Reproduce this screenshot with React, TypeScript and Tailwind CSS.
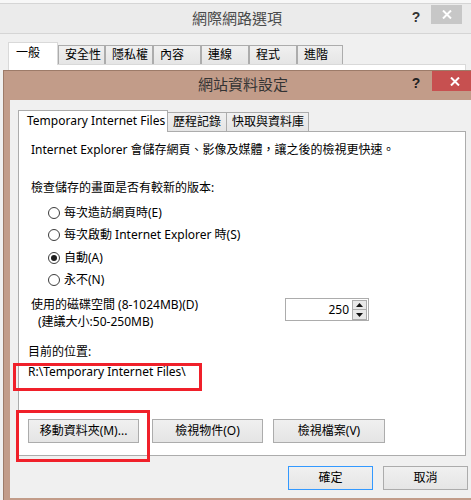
const ui = "font-['Noto_Sans','Noto_Sans_CJK_TC',sans-serif]";

function CloseGlyph() {
  return (
    <svg width="10" height="9" viewBox="0 0 10 9">
      <path d="M1 0.5 L9 8.5 M9 0.5 L1 8.5" stroke="#fff" strokeWidth="2" />
    </svg>
  );
}

function Btn({ label, w, primary }: { label: string; w: string; primary?: boolean }) {
  return (
    <div
      className={`${w} h-[24px] flex items-center justify-center border bg-linear-to-b from-[#f0f0f0] to-[#e5e5e5] leading-[16px] ${
        primary ? 'border-[#3399ff]' : 'border-[#acacac]'
      }`}
    >
      {label}
    </div>
  );
}

function Radio({ label, checked, h }: { label: string; checked?: boolean; h: string }) {
  return (
    <div className={`flex items-center ${h} pl-[29px] leading-[16px]`}>
      <span className="w-[12px] h-[12px] rounded-full border border-[#3c3c3c] bg-white flex items-center justify-center">
        {checked && <span className="w-[6px] h-[6px] rounded-full bg-[#1e1e1e]" />}
      </span>
      <span className="ml-[4px]">{label}</span>
    </div>
  );
}

export default function App() {
  const outerTabs = [
    { label: '安全性', w: 'w-[47px]' },
    { label: '隱私權', w: 'w-[48px]' },
    { label: '內容', w: 'w-[48px]' },
    { label: '連線', w: 'w-[48px]' },
    { label: '程式', w: 'w-[48px]' },
    { label: '進階', w: 'w-[46px]' },
  ];

  return (
    <div className={`relative w-[471px] h-[500px] overflow-hidden bg-[#f0f0f0] text-[12px] text-black ${ui}`}>
      {/* 網際網路選項 (外層視窗) */}
      <div className="h-[3px] bg-[#f7f7f7]" />
      <div className="flex h-[31px] border-t border-b border-[#d5d5d5] bg-[#ebebeb]">
        <div className="flex-1 pl-[66px] text-center text-[15px] leading-[29px] text-[#4a4a4a]">網際網路選項</div>
        <div className="w-[16px] text-center font-['Liberation_Sans',sans-serif] font-bold text-[14px] leading-[26px] text-[#333]">?</div>
        <div className="ml-[7px] mr-[9px] mt-[1px] w-[31px] h-[19px] bg-[#c7c7c7] flex items-center justify-center">
          <CloseGlyph />
        </div>
      </div>
      <div className="mt-[8px] ml-[8px] flex items-end h-[22px]">
        <div className="relative z-10 -mb-px w-[50px] h-[23px] pl-[7px] border border-b-0 border-[#d9d9d9] bg-white leading-[20px]">一般</div>
        {outerTabs.map((t) => (
          <div
            key={t.label}
            className={`${t.w} h-[19px] pl-[6px] border border-b-0 border-[#acacac] bg-linear-to-b from-[#f0f0f0] to-[#e5e5e5] leading-[18px]`}
          >
            {t.label}
          </div>
        ))}
      </div>
      <div className="ml-[8px] w-[458px] h-[100px] border border-[#d9d9d9] bg-white" />

      {/* 網站資料設定 (內層視窗) */}
      <div className="absolute left-[3px] top-[70px] w-[480px] h-[432px] border border-[#9d7b69] bg-[#c29c89] flex flex-col">
        <div className="flex h-[29px] shrink-0">
          <div className="flex-1 pl-[74px] text-center text-[15px] leading-[27px] text-[#333]">網站資料設定</div>
          <div className="w-[16px] text-center font-['Liberation_Sans',sans-serif] font-bold text-[14px] leading-[24px] text-[#222]">?</div>
          <div className="ml-[8px] mr-[4px] w-[46px] h-[20px] bg-[#c75050] flex items-center justify-center">
            <CloseGlyph />
          </div>
        </div>
        <div className="mx-[6px] h-[398px] bg-[#f0f0f0] pt-[10px]">
          <div className="ml-[8px] flex items-end h-[21px]">
            <div className="relative z-10 -mb-px w-[150px] h-[22px] pl-[8px] border border-b-0 border-[#acacac] bg-white leading-[20px]">
              Temporary Internet Files
            </div>
            <div className="w-[59px] h-[19px] pl-[5px] border border-b-0 border-l-0 border-[#acacac] bg-linear-to-b from-[#f0f0f0] to-[#e5e5e5] leading-[18px]">
              歷程記錄
            </div>
            <div className="w-[82px] h-[19px] pl-[5px] border border-b-0 border-l-0 border-[#acacac] bg-linear-to-b from-[#f0f0f0] to-[#e5e5e5] leading-[18px]">
              快取與資料庫
            </div>
          </div>

          <div className="ml-[8px] w-[448px] h-[325px] border border-[#acacac] bg-white flex flex-col">
            <div className="mt-[10px] pl-[12px] h-[16px] leading-[16px]">
              Internet Explorer 會儲存網頁、影像及媒體，讓之後的檢視更快速。
            </div>
            <div className="mt-[22px] pl-[12px] h-[16px] leading-[16px]">檢查儲存的畫面是否有較新的版本:</div>
            <div className="mt-[5px]">
              <Radio label="每次造訪網頁時(E)" h="h-[23px]" />
              <Radio label="每次啟動 Internet Explorer 時(S)" h="h-[22px]" />
              <Radio label="自動(A)" checked h="h-[23px]" />
              <Radio label="永不(N)" h="h-[22px]" />
            </div>

            <div className="mt-[6px] flex pl-[12px]">
              <div className="w-[254px] leading-[16px]">
                <div className="h-[16px]">使用的磁碟空間 (8-1024MB)(D)</div>
                <div className="h-[17px] pl-[7px] leading-[17px]">(建議大小:50-250MB)</div>
              </div>
              <div className="mt-[1px] w-[84px] h-[23px] border border-[#acacac] bg-white flex">
                <div className="flex-1 text-right pr-[3px] leading-[21px]">250</div>
                <div className="w-[15px] mr-[1px] mt-[1px] flex flex-col">
                  <div className="h-[10px] border border-[#acacac] bg-[#e8e8e8] flex items-center justify-center">
                    <svg width="7" height="4" viewBox="0 0 7 4">
                      <path d="M3.5 0 L7 4 L0 4 Z" fill="#111" />
                    </svg>
                  </div>
                  <div className="h-[10px] border border-t-0 border-[#acacac] bg-[#e8e8e8] flex items-center justify-center">
                    <svg width="7" height="4" viewBox="0 0 7 4">
                      <path d="M0 0 L7 0 L3.5 4 Z" fill="#111" />
                    </svg>
                  </div>
                </div>
              </div>
            </div>

            <div className="mt-[14px] pl-[9px] h-[16px] leading-[16px]">目前的位置:</div>
            <div className="mt-[4px] pl-[9px] h-[16px] leading-[16px]">R:\Temporary Internet Files\</div>

            <div className="mt-[39px] pl-[9px] flex">
              <Btn label="移動資料夾(M)..." w="w-[111px]" />
              <div className="ml-[13px]">
                <Btn label="檢視物件(O)" w="w-[111px]" />
              </div>
              <div className="ml-[10px]">
                <Btn label="檢視檔案(V)" w="w-[112px]" />
              </div>
            </div>
          </div>

          <div className="mt-[10px] pl-[278px] flex gap-[10px]">
            <Btn label="確定" w="w-[85px]" primary />
            <Btn label="取消" w="w-[85px]" />
          </div>
        </div>
      </div>

      {/* 紅色標示框 */}
      <div className="absolute left-[13px] top-[363px] w-[189px] h-[28px] border-[3px] border-[#f0202a]" />
      <div className="absolute left-[16px] top-[410px] w-[134px] h-[52px] border-[3px] border-[#f0202a]" />
    </div>
  );
}
